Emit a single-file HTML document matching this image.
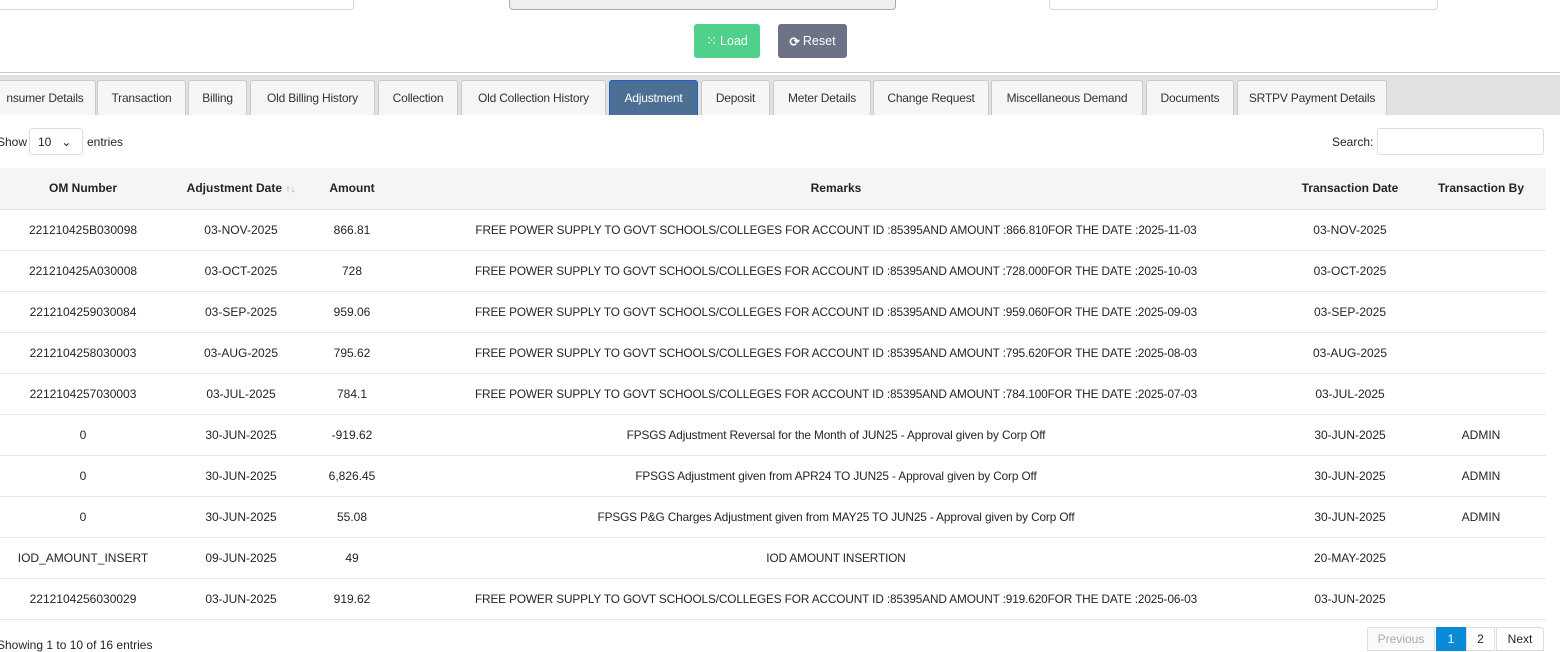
<!DOCTYPE html>
<html><head><meta charset="utf-8"><style>
*{box-sizing:border-box;margin:0;padding:0}
body{width:1560px;height:644px;overflow:hidden;background:#fff;font-family:"Liberation Sans",sans-serif;font-size:12px;color:#212529;position:relative}
.a{position:absolute}
.inp{border:1px solid #d6d6d6;border-top:none;border-radius:0 0 4px 4px;background:#fff}
.btn{color:#fff;border-radius:3px;font-size:12.5px;display:flex;align-items:center;justify-content:center;gap:3px}
.tabbar{left:0;top:75px;width:1560px;height:40px;background:#e3e1df}
.tab{top:80px;height:35px;border:1px solid #c9c9c9;border-bottom:none;background:#f6f6f6;border-radius:3px 3px 0 0;display:flex;align-items:center;justify-content:center;white-space:nowrap;color:#333;font-size:12px;letter-spacing:-0.2px}
.tab.act{background:#4b7094;color:#fff;border:1px solid #1a5fd0;border-bottom:none}
table{position:absolute;left:0;top:168px;width:1546px;border-collapse:collapse;table-layout:fixed}
th{height:41px;background:#f5f5f5;font-weight:bold;font-size:12px;text-align:center;border-bottom:1px solid #e6e6e6}
td{height:41px;text-align:center;border-bottom:1px solid #e6e6e6;font-size:12px;white-space:nowrap}
td.r{font-size:11.8px;letter-spacing:-0.12px}
.pg{top:627px;height:24px;border:1px solid #ddd;display:flex;align-items:center;justify-content:center;font-size:12px}
</style></head><body>
<div class="a inp" style="left:-5px;top:0;width:359px;height:10px"></div>
<div class="a inp" style="left:509px;top:0;width:387px;height:10px;background:#efefef;border-color:#a9a9a9"></div>
<div class="a inp" style="left:1049px;top:0;width:389px;height:10px"></div>
<div class="a btn" style="left:694px;top:24px;width:66px;height:34px;background:#4fd18b"><span style="font-size:13px">⁙</span>Load</div>
<div class="a btn" style="left:778px;top:24px;width:69px;height:34px;background:#6d7287"><span style="font-weight:bold">⟳</span>Reset</div>
<div class="a" style="left:0;top:72px;width:1560px;height:1px;background:#c8c8c8"></div>
<div class="a tabbar"></div>
<div class="a tab" style="left:-6px;width:102px">nsumer Details</div>
<div class="a tab" style="left:97px;width:89px">Transaction</div>
<div class="a tab" style="left:188px;width:59px">Billing</div>
<div class="a tab" style="left:250px;width:125px">Old Billing History</div>
<div class="a tab" style="left:378px;width:80px">Collection</div>
<div class="a tab" style="left:461px;width:145px">Old Collection History</div>
<div class="a tab act" style="left:609px;width:89px">Adjustment</div>
<div class="a tab" style="left:701px;width:69px">Deposit</div>
<div class="a tab" style="left:773px;width:98px">Meter Details</div>
<div class="a tab" style="left:873px;width:116px">Change Request</div>
<div class="a tab" style="left:991px;width:152px">Miscellaneous Demand</div>
<div class="a tab" style="left:1146px;width:88px">Documents</div>
<div class="a tab" style="left:1237px;width:150px">SRTPV Payment Details</div>
<div class="a" style="left:-3px;top:135px">Show</div>
<div class="a" style="left:29px;top:128px;width:54px;height:27px;border:1px solid #ddd;border-radius:3px;padding:6px 0 0 8px">10 &nbsp;&nbsp;⌄</div>
<div class="a" style="left:87px;top:135px">entries</div>
<div class="a" style="left:1332px;top:135px">Search:</div>
<div class="a" style="left:1377px;top:128px;width:167px;height:27px;border:1px solid #ddd;border-radius:3px"></div>
<table>
<colgroup><col style="width:166px"><col style="width:150px"><col style="width:72px"><col style="width:896px"><col style="width:132px"><col style="width:130px"></colgroup>
<tr><th>OM Number</th><th>Adjustment Date <span style="color:#c9a;font-weight:normal;font-size:10px">↑↓</span></th><th>Amount</th><th>Remarks</th><th>Transaction Date</th><th>Transaction By</th></tr>
<tr><td>221210425B030098</td><td>03-NOV-2025</td><td>866.81</td><td class="r">FREE POWER SUPPLY TO GOVT SCHOOLS/COLLEGES FOR ACCOUNT ID :85395AND AMOUNT :866.810FOR THE DATE :2025-11-03</td><td>03-NOV-2025</td><td></td></tr>
<tr><td>221210425A030008</td><td>03-OCT-2025</td><td>728</td><td class="r">FREE POWER SUPPLY TO GOVT SCHOOLS/COLLEGES FOR ACCOUNT ID :85395AND AMOUNT :728.000FOR THE DATE :2025-10-03</td><td>03-OCT-2025</td><td></td></tr>
<tr><td>2212104259030084</td><td>03-SEP-2025</td><td>959.06</td><td class="r">FREE POWER SUPPLY TO GOVT SCHOOLS/COLLEGES FOR ACCOUNT ID :85395AND AMOUNT :959.060FOR THE DATE :2025-09-03</td><td>03-SEP-2025</td><td></td></tr>
<tr><td>2212104258030003</td><td>03-AUG-2025</td><td>795.62</td><td class="r">FREE POWER SUPPLY TO GOVT SCHOOLS/COLLEGES FOR ACCOUNT ID :85395AND AMOUNT :795.620FOR THE DATE :2025-08-03</td><td>03-AUG-2025</td><td></td></tr>
<tr><td>2212104257030003</td><td>03-JUL-2025</td><td>784.1</td><td class="r">FREE POWER SUPPLY TO GOVT SCHOOLS/COLLEGES FOR ACCOUNT ID :85395AND AMOUNT :784.100FOR THE DATE :2025-07-03</td><td>03-JUL-2025</td><td></td></tr>
<tr><td>0</td><td>30-JUN-2025</td><td>-919.62</td><td class="r">FPSGS Adjustment Reversal for the Month of JUN25 - Approval given by Corp Off</td><td>30-JUN-2025</td><td>ADMIN</td></tr>
<tr><td>0</td><td>30-JUN-2025</td><td>6,826.45</td><td class="r">FPSGS Adjustment given from APR24 TO JUN25 - Approval given by Corp Off</td><td>30-JUN-2025</td><td>ADMIN</td></tr>
<tr><td>0</td><td>30-JUN-2025</td><td>55.08</td><td class="r">FPSGS P&amp;G Charges Adjustment given from MAY25 TO JUN25 - Approval given by Corp Off</td><td>30-JUN-2025</td><td>ADMIN</td></tr>
<tr><td>IOD_AMOUNT_INSERT</td><td>09-JUN-2025</td><td>49</td><td class="r">IOD AMOUNT INSERTION</td><td>20-MAY-2025</td><td></td></tr>
<tr><td>2212104256030029</td><td>03-JUN-2025</td><td>919.62</td><td class="r">FREE POWER SUPPLY TO GOVT SCHOOLS/COLLEGES FOR ACCOUNT ID :85395AND AMOUNT :919.620FOR THE DATE :2025-06-03</td><td>03-JUN-2025</td><td></td></tr>
</table>
<div class="a" style="left:-3px;top:638px">Showing 1 to 10 of 16 entries</div>
<div class="a pg" style="left:1367px;width:68px;color:#aaa;background:#f9f9f9;border-radius:3px 0 0 0">Previous</div>
<div class="a pg" style="left:1436px;width:30px;background:#0b8ad8;color:#fff;border-color:#0b8ad8">1</div>
<div class="a pg" style="left:1466px;width:29px">2</div>
<div class="a pg" style="left:1496px;width:48px;border-radius:0 3px 0 0">Next</div>
</body></html>
